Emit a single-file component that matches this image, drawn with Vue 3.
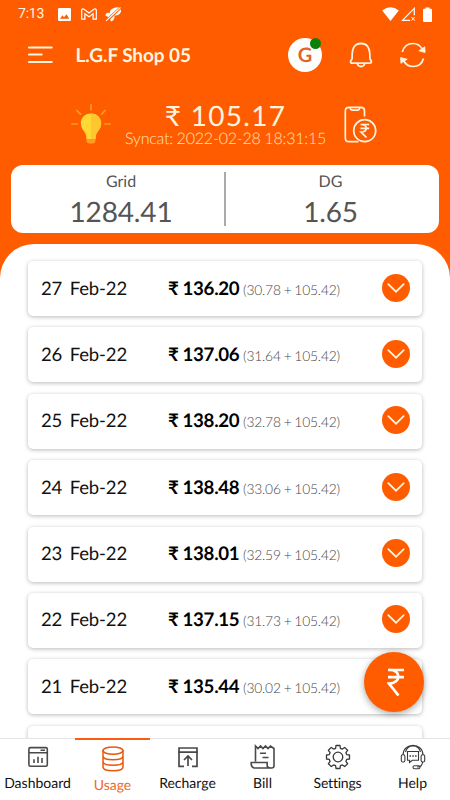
<script setup>
const rows = [
  { date: '27 Feb-22', total: '136.20', parts: '(30.78 + 105.42)' },
  { date: '26 Feb-22', total: '137.06', parts: '(31.64 + 105.42)' },
  { date: '25 Feb-22', total: '138.20', parts: '(32.78 + 105.42)' },
  { date: '24 Feb-22', total: '138.48', parts: '(33.06 + 105.42)' },
  { date: '23 Feb-22', total: '138.01', parts: '(32.59 + 105.42)' },
  { date: '22 Feb-22', total: '137.15', parts: '(31.73 + 105.42)' },
  { date: '21 Feb-22', total: '135.44', parts: '(30.02 + 105.42)' },
  { date: '', total: '', parts: '' }
]
</script>

<template>
  <div class="app">
    <div class="status">
      <span class="time">7:13</span>
      <svg class="s-img" width="13" height="13" viewBox="0 0 13 13"><rect width="13" height="13" rx="1.3" fill="#fff" /><path d="M2 10.7 4.4 7.2l1.6 2 2.6-3 2.6 4.5z" fill="#ff5c00" /></svg>
      <svg class="s-mail" width="16" height="12" viewBox="0 0 16 12"><path d="M.7 11.2V1.7Q1.6.2 3 1.2L8 5l5-3.8q1.4-1 2.3.5v9.5h-3.2V5.7L8 8.8 3.9 5.7v5.5z" fill="none" stroke="#fff" stroke-width="1.2" /></svg>
      <svg class="s-off" width="17" height="15" viewBox="0 0 17 15"><path d="M5 4Q8-.2 14.8.4 17.500 4 14.500 7 12 8.800 9.500 8.500 10 13 6 14.500L4.500 10.500.5 8.700Q.5 5 5 6z" fill="#fff" /><path d="M1.500 13.800 15.500.7" stroke="#ff5c00" stroke-width="2.800" /><path d="M1 13.800 15.500.5" stroke="#fff" stroke-width="1.100" /></svg>
      <span class="grow"></span>
      <svg width="17" height="14" viewBox="0 0 17 14"><path d="M8.500 14 .2 3.500Q8.500-2.800 16.800 3.500z" fill="#fff" /></svg>
      <svg class="s-cell" width="15" height="14" viewBox="0 0 15 14"><path d="M9 13.300H1.500L13.300 1.300v7" fill="none" stroke="#fff" stroke-width="1.200" /><path d="m10.500 10 3.300 3.600m0-3.600-3.300 3.600" stroke="#fff" /></svg>
      <svg width="9" height="15" viewBox="0 0 9 15"><path d="M0 2.700Q0 1.700 1 1.700h1.500V.5h4v1.200H8q1 0 1 1V14q0 1-1 1H1q-1 0-1-1z" fill="#fff" /></svg>
    </div>

    <header class="bar">
      <svg class="menu" width="25" height="18" viewBox="0 0 25 18"><path d="M.8 1.500h23M.8 8.500h13M.8 16h23" stroke="#fff4df" stroke-width="1.900" stroke-linecap="round" /></svg>
      <h1>L.G.F Shop 05</h1>
      <div class="source"><span>G</span><i class="online"></i></div>
      <svg class="bell" width="24" height="28" viewBox="0 0 24 28"><path d="M3.100 17.400C2.800 7.200 5.300 2.500 12 2.500s9.200 4.700 8.900 14.900c0 1 1.500 1.800 1.500 3.300q0 1.400-1.500 1.400H3.100q-1.500 0-1.500-1.400c0-1.500 1.500-2.300 1.500-3.300zM8.400 22.500c.5 4 6.700 4 7.200 0" fill="none" stroke="#fff4df" stroke-width="1.800" /></svg>
      <svg class="sync" width="26" height="26" viewBox="0 0 26 26"><path d="M2.300 10C4 4 8.500 1.500 13 1.500c4.500 0 7.500 2.200 9.500 6M23.500 16.500C22 22 17.500 24.500 13 24.500c-4.500 0-7.500-2.200-9.500-6" fill="none" stroke="#fff4df" stroke-width="1.700" /><path d="m18.800 8.800 6-4 .3 5.700zM7.200 17.200.9 21.300l-.3-5.700z" fill="#fff4df" stroke="#fff4df" stroke-width=".8" /></svg>
    </header>

    <section class="balance">
      <svg class="bulb" width="40" height="40" viewBox="0 0 40 40"><path d="M20 .8v5M5.800 6.500 9.500 10.200M34.200 6.500 30.500 10.200M.8 20h5.500M33.700 20h5.500" stroke="#ff9d18" stroke-width="1.700" stroke-linecap="round" /><path d="M15.500 33h9v3.500q0 3-3 3h-3q-3 0-3-3z" fill="#ff9b20" /><path d="M20 9.500C13.500 9.500 9.800 14.300 9.800 19.300c0 7 5.700 7.700 5.700 15.700h9c0-8 5.700-8.700 5.700-15.700 0-5-3.700-9.800-10.200-9.800z" fill="#ffd834" /><path d="M20 9.500v25.500h4.500c0-8 5.700-8.700 5.700-15.700 0-5-3.700-9.800-10.200-9.800z" fill="#ffc62e" /></svg>
      <div class="figures">
        <div class="amount"><span class="rs">₹</span> 105.17</div>
        <div class="synced">Syncat: 2022-02-28 18:31:15</div>
      </div>
      <svg class="phone" width="33" height="37" viewBox="0 0 33 37"><path d="M20.500 10.500V5q0-3.700-3.700-3.700H5Q1.300 1.300 1.300 5v27q0 3.700 3.700 3.700h9.500M6 1.500q.4 2.700 2.200 2.700h5.400q1.800 0 2.200-2.700" fill="none" stroke="#fff4df" stroke-width="1.700" /><circle cx="20.700" cy="24.700" r="11" fill="#ff5c00" stroke="#fff4df" stroke-width="1.700" /><path d="M16.500 18.500h8.700m-8.700 3.800h8.700M17 18.500c7 0 7 7.500 0 7.500l5.500 5.500" fill="none" stroke="#fff4df" stroke-width="1.700" /></svg>
    </section>

    <section class="meter">
      <div class="cell grid-cell"><span>Grid</span><b>1284.41</b></div>
      <i class="divider"></i>
      <div class="cell dg-cell"><span>DG</span><b>1.65</b></div>
    </section>

    <main class="sheet">
      <article v-for="(row, i) in rows" :key="i" class="row">
        <span class="date">{{ row.date }}</span>
        <span class="total"><template v-if="row.total"><span class="rs">₹</span>{{ row.total }}</template></span>
        <span class="parts">{{ row.parts }}</span>
        <span class="toggle"><svg width="18" height="10" viewBox="0 0 18 10"><path d="m1.300 1.200 7.700 7.500 7.700-7.500" fill="none" stroke="#fff4df" stroke-width="1.700" stroke-linecap="round" /></svg></span>
      </article>
    </main>

    <nav class="tabs">
      <div class="tab">
        <svg width="26" height="26" viewBox="0 0 26 26" fill="none" stroke="#4a4a4c" stroke-width="1.600"><rect x="3.900" y="3.600" width="18.400" height="18.600" rx="1.500" /><path d="M4 8.700h18M15.500 6.200h4.500M9 19v-3.700M13 19v-6.300M17 19v-5" /></svg>
        <span>Dashboard</span>
      </div>
      <div class="tab active">
        <svg width="26" height="26" viewBox="0 0 26 26" fill="none" stroke="#e9570d" stroke-width="1.500"><ellipse cx="13" cy="4.600" rx="10" ry="3.700" /><path d="M3 4.600v16.500c0 5 20 5 20 0V4.600M3 10c0 5 20 5 20 0M3 15.500c0 5 20 5 20 0" /></svg>
        <span>Usage</span>
      </div>
      <div class="tab">
        <svg width="26" height="26" viewBox="0 0 26 26" fill="none" stroke="#4a4a4c" stroke-width="1.700"><path d="M9 22.300H4V4h18v18.300h-5M3 8.200h20M13 22v-9.700M9 16l4-4 4 4" /></svg>
        <span>Recharge</span>
      </div>
      <div class="tab">
        <svg width="26" height="26" viewBox="0 0 26 26" fill="none" stroke="#4a4a4c" stroke-width="1.600"><path d="M5.500 17.500V2l2.500 2.500L10.500 2 13 4.500 15.500 2 18 4.500 20.500 2 24 4.500V22q0 2-2.500 2H4q-3.200-1-2.800-5.500h16V22q.5 2 3.500 2M10 9.300h6M12.500 13.500h6" /></svg>
        <span>Bill</span>
      </div>
      <div class="tab">
        <svg width="26" height="26" viewBox="0 0 26 26" fill="none" stroke="#39393b" stroke-width="1.300" stroke-linejoin="round"><path d="M10.600 4.300 11 1.500h4l.4 2.800 2 .8 2.300-1.700 2.900 2.900-1.700 2.300.8 2 2.800.4v4l-2.800.4-.8 2 1.700 2.300-2.900 2.900-2.300-1.700-2 .8-.4 2.800h-4l-.4-2.800-2-.8-2.300 1.700-2.900-2.900 1.700-2.300-.8-2-2.800-.4v-4l2.800-.4.8-2-1.700-2.300 2.900-2.900 2.300 1.700z" /><circle cx="13" cy="13" r="4.800" /></svg>
        <span class="tight">Settings</span>
      </div>
      <div class="tab">
        <svg width="26" height="26" viewBox="0 0 26 26" fill="none" stroke="#39393b" stroke-width="1.100"><path d="M3 11C3.500-2 22.500-2 23 11M5.500 8c2-8 13-8 15 0M22.500 18c0 3-2 5-5.500 5" /><rect x="1.300" y="10.700" width="3.600" height="7.300" rx="1.600" /><rect x="21.100" y="10.700" width="3.600" height="7.300" rx="1.600" /><path d="M7.500 7.500h11v8.700h-6.200L9.500 18.500v-2.300h-2z" /><rect x="13" y="21.700" width="7" height="3" rx="1.500" /><path d="M9.500 12h1.500m1.300 0h1.500m1.300 0h1.500" stroke-width="1.500" /></svg>
        <span>Help</span>
      </div>
    </nav>

    <button class="fab"><svg width="18" height="29" viewBox="0 0 18 29"><path d="M1 2h16M1 9.200h16M1.500 2C14.500 1 14.500 15.500 2 15.500L11.500 27.500" fill="none" stroke="#fff" stroke-width="2.700" /></svg></button>
  </div>
</template>

<style>
body { margin: 0; }
</style>

<style scoped>
* { box-sizing: border-box; }
svg { display: block; flex: none; }
.app { position: relative; display: flex; flex-direction: column; width: 450px; height: 800px; overflow: hidden; background: #ff5c00; font-family: Lato, "Liberation Sans", sans-serif; color: #111; text-rendering: geometricPrecision; font-variant-ligatures: none; }
.status { display: flex; align-items: center; height: 28px; padding: 0 18px 0 18px; flex: none; }
.time { width: 40px; font: 400 14px Roboto, sans-serif; color: #fff4e8; letter-spacing: -.2px; }
.s-mail { margin-left: 10px; }
.s-off { margin-left: 8px; }
.grow { flex: 1; }
.s-cell { margin: 0 7px 0 2px; }
.bar { display: flex; align-items: center; height: 54px; padding: 0 24px 0 28px; flex: none; }
h1 { flex: 1; margin: 2px 0 0 22.500px; font-size: 19px; font-weight: 700; line-height: 24px; color: #fff4df; letter-spacing: -.1px; white-space: nowrap; }
.source { position: relative; width: 34px; height: 34px; border-radius: 50%; background: #fff; color: #e4632a; font-size: 20px; font-weight: 700; line-height: 35px; text-align: center; }
.online { position: absolute; right: 1px; top: 0; width: 11px; height: 11px; border-radius: 50%; background: #0b8008; }
.bell { margin: 0 27px; }
.balance { display: flex; height: 83px; flex: none; padding-left: 71px; }
.bulb { margin-top: 22px; }
.figures { width: 229px; text-align: center; color: #fff4df; white-space: nowrap; }
.amount { margin-top: 16px; height: 32px; font-size: 28px; line-height: 34px; letter-spacing: 1.3px; }
.synced { font-size: 16px; line-height: 18px; font-weight: 300; word-spacing: -.5px; letter-spacing: -.2px; color: #ffe3b8; }
.phone { margin: 24px 0 0 4px; }
.meter { display: flex; align-items: center; height: 68px; margin: 0 11px; flex: none; border-radius: 12px; background: #fff; color: #555; }
.cell { flex: none; width: 213px; display: flex; flex-direction: column; align-items: center; }
.grid-cell { padding-left: 7px; }
.dg-cell { padding-right: 4px; }
.cell span { font-size: 16px; line-height: 23px; }
.cell b { font-size: 28px; line-height: 36px; font-weight: 400; letter-spacing: -.15px; }
.divider { width: 2px; height: 54px; background: #aaa; }
.sheet { flex: 1; min-height: 0; display: flex; flex-direction: column; gap: 11.400px; margin-top: 11px; padding: 17px 28px 0; overflow: hidden; border-radius: 34px 34px 0 0; background: #fff; }
.row { display: grid; grid-template-columns: 127px 75px 1fr 28px; align-items: center; flex: none; height: 55px; padding: 0 12px 2px 13px; border-radius: 5px; background: #fff; box-shadow: 0 1px 4px rgba(0, 0, 0, .28); white-space: nowrap; }
.date { font-size: 18.500px; line-height: 24px; word-spacing: 3px; letter-spacing: -.15px; }
.total { font-size: 18.700px; line-height: 24px; font-weight: 700; letter-spacing: -.3px; color: #000; }
.total .rs { margin-right: 4px; }
.parts { padding-top: 4px; font-size: 13.800px; line-height: 18px; font-weight: 300; word-spacing: -.7px; letter-spacing: -.17px; color: #444; }
.toggle { display: grid; place-items: center; width: 28px; height: 28px; border-radius: 50%; background: #ff5c00; }
.tabs { display: flex; height: 62px; flex: none; background: #fff; border-top: 1px solid #e4e4e4; }
.tab { flex: 1; display: flex; flex-direction: column; align-items: center; padding-top: 5px; font-size: 14px; line-height: 18px; }
.tab span { margin-top: 4px; }
.tab .tight { letter-spacing: -.2px; }
.tab.active { margin-top: -1px; padding-top: 6px; border-top: 2px solid #ff5c13; color: #ec6827; }
.fab { position: absolute; left: 364px; top: 652px; width: 60px; height: 60px; display: grid; place-items: center; padding: 0 0 0 3px; border: 0; border-radius: 50%; background: #ff5c00; box-shadow: 0 2px 7px rgba(0, 0, 0, .35); }
</style>
